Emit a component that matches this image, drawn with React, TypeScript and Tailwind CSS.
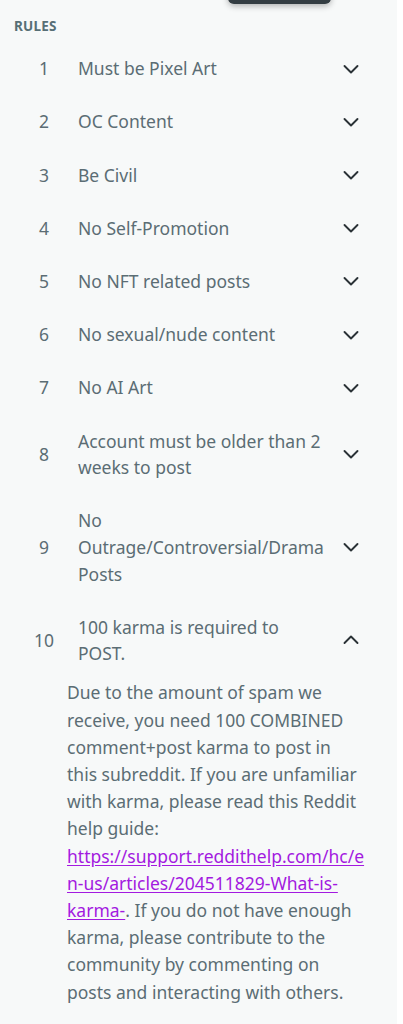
import React from 'react';

interface Rule {
  num: number;
  title: string;
  open?: boolean;
}

const RULES: Rule[] = [
  { num: 1, title: 'Must be Pixel Art' },
  { num: 2, title: 'OC Content' },
  { num: 3, title: 'Be Civil' },
  { num: 4, title: 'No Self-Promotion' },
  { num: 5, title: 'No NFT related posts' },
  { num: 6, title: 'No sexual/nude content' },
  { num: 7, title: 'No AI Art' },
  { num: 8, title: 'Account must be older than 2 weeks to post' },
  { num: 9, title: 'No Outrage/Controversial/Drama Posts' },
  { num: 10, title: '100 karma is required to POST.', open: true },
];

// small chevron, flipped when the rule is open
const Chevron = ({ up = false }: { up?: boolean }) => (
  <svg
    width="20"
    height="20"
    viewBox="0 0 20 20"
    fill="none"
    stroke="#2a3236"
    strokeWidth="1.9"
    strokeLinecap="round"
    strokeLinejoin="round"
    className={up ? 'rotate-180' : ''}
  >
    <path d="M3.5 7l6.5 6.5L16.5 7" />
  </svg>
);

const RuleRow = ({ rule }: { rule: Rule }) => (
  <li className="py-[13.3px]">
    <div className="flex items-center">
      <div className="ml-[14px] w-[60px] shrink-0 text-center">{rule.num}</div>
      <div className="ml-[4px] flex-1 pr-[15px]">{rule.title}</div>
      <div className="mr-[36px] flex w-[20px] shrink-0 justify-center">
        <Chevron up={rule.open} />
      </div>
    </div>
    {rule.open && (
      <div className="mt-[12.5px] ml-[67px] mr-[32.5px] leading-[27.2px] [overflow-wrap:anywhere]">
        Due to the amount of spam we receive, you need 100 COMBINED comment+post karma to post in this
        subreddit. If you are unfamiliar with karma, please read this Reddit help guide:{' '}
        <a href="#" className="text-[#a31ae0] underline underline-offset-2">
          https://support.reddithelp.com/hc/en-us/articles/204511829-What-is-karma-
        </a>
        . If you do not have enough karma, please contribute to the community by commenting on posts
        and interacting with others.
      </div>
    )}
  </li>
);

export default function App() {
  return (
    <div className="min-h-[1024px] bg-white" style={{ fontFamily: '"Noto Sans", "Open Sans", sans-serif' }}>
      <div className="relative min-h-[1024px] w-[397px] overflow-hidden bg-[#f7f9f9] text-[#5b6d74]">
        {/* floating pill sticking in from the top */}
        <div className="absolute left-[228px] top-[-20px] h-[24px] w-[103px] rounded-[6px] bg-[#333d42] shadow-[0_2px_6px_rgba(0,0,0,0.3)]" />

        <h2 className="px-[14px] pt-[18px] text-[13.5px] font-bold leading-[16px] tracking-[0.2px] text-[#576f76]">
          RULES
        </h2>

        <ol className="mt-[8px] text-[17.5px] leading-[26.6px]">
          {RULES.map((r) => (
            <RuleRow key={r.num} rule={r} />
          ))}
        </ol>
      </div>
    </div>
  );
}
